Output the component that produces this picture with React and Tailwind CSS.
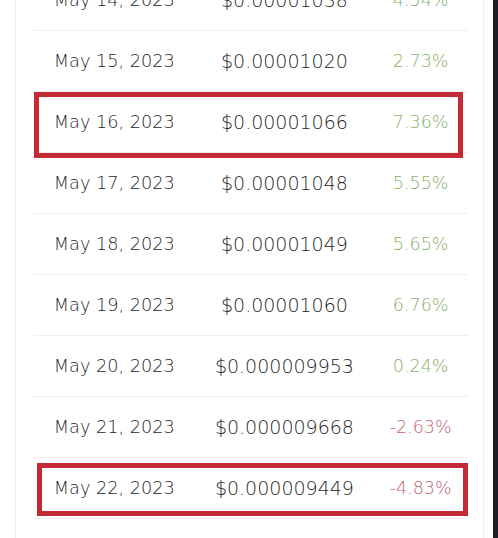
import React from "react";

const rows = [
  ["May 14, 2023", "$0.00001038", "4.54%", true],
  ["May 15, 2023", "$0.00001020", "2.73%", true],
  ["May 16, 2023", "$0.00001066", "7.36%", true],
  ["May 17, 2023", "$0.00001048", "5.55%", true],
  ["May 18, 2023", "$0.00001049", "5.65%", true],
  ["May 19, 2023", "$0.00001060", "6.76%", true],
  ["May 20, 2023", "$0.000009953", "0.24%", true],
  ["May 21, 2023", "$0.000009668", "-2.63%", false],
  ["May 22, 2023", "$0.000009449", "-4.83%", false],
  ["May 23, 2023", "$0.000009501", "-3.12%", false],
];

export default function App() {
  return (
    <div
      className="relative flex h-[538px] w-[498px] overflow-hidden bg-white font-light text-[#1f1f1f]"
      style={{ fontFamily: '"DejaVu Sans", sans-serif' }}
    >
      <div className="ml-[15px] h-full w-[469px] border-x border-[#ededed] pl-[17px] pr-[15px]">
        <div className="-mt-[30px]">
          {rows.map(([d, p, c, up]) => (
            <div key={d} className="flex h-[61px] items-center border-b border-[#eeeeee]">
              <div className="w-[163px] text-center text-[17.7px]">{d}</div>
              <div className="w-[178px] text-center text-[19px]">{p}</div>
              <div className={`w-[95px] text-center text-[17.5px] ${up ? "text-[#84b06a]" : "text-[#bd6470]"}`}>{c}</div>
            </div>
          ))}
        </div>
      </div>
      <div className="ml-[9px] h-full flex-1 bg-[#1d1d25]" />
      <div className="absolute left-[34px] top-[92px] h-[66px] w-[429px] border-[5px] border-[#c32a33]" />
      <div className="absolute left-[37px] top-[463px] h-[53px] w-[431px] border-[5px] border-[#c32a33]" />
    </div>
  );
}
